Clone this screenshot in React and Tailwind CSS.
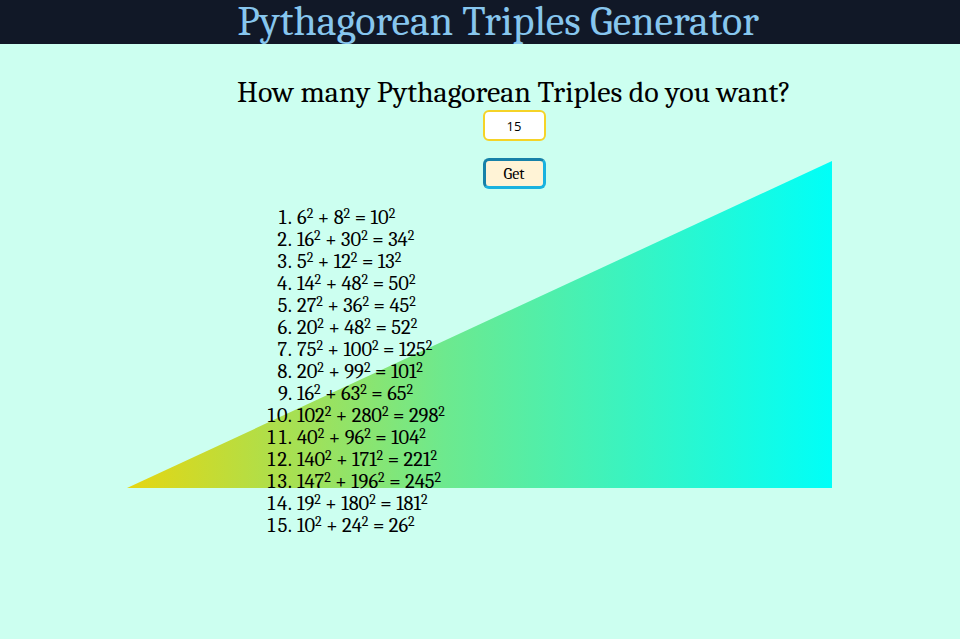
import React, { useState } from 'react';

// Pythagorean triples list, same order as the screenshot
const triples = [
  [6, 8, 10], [16, 30, 34], [5, 12, 13], [14, 48, 50], [27, 36, 45],
  [20, 48, 52], [75, 100, 125], [20, 99, 101], [16, 63, 65], [102, 280, 298],
  [40, 96, 104], [140, 171, 221], [147, 196, 245], [19, 180, 181], [10, 24, 26],
];

const serif = "font-['Cambria','Liberation_Serif',serif]";

const Sq = ({ n }) => (
  <span>
    {n}<sup className="-top-[0.45em] text-[14px]">2</sup>
  </span>
);

const App = () => {
  const [count, setCount] = useState('15');

  return (
    <div className={`relative min-h-[639px] w-full overflow-hidden bg-[#ccfff0] ${serif}`}>
      {/* Triangle backdrop */}
      <svg className="absolute left-[127px] top-[161px]" width="705" height="327" viewBox="0 0 705 327">
        <defs>
          <linearGradient id="tri" x1="0" y1="0" x2="1" y2="0">
            <stop offset="0%" stopColor="#e6d611" />
            <stop offset="45%" stopColor="#6de98e" />
            <stop offset="100%" stopColor="#00fff8" />
          </linearGradient>
        </defs>
        <polygon points="0,327 705,0 705,327" fill="url(#tri)" />
      </svg>

      <header className="relative h-[44px] bg-[#111827] pl-[36px] text-center">
        <h1 className="text-[42px] leading-[44px] text-[#87c6ee]">Pythagorean Triples Generator</h1>
      </header>

      <main className="relative flex flex-col items-center pl-[68px] pt-[32px]">
        <h2 className="text-[30px] leading-[34px] text-black">How many Pythagorean Triples do you want?</h2>
        <input
          value={count}
          onChange={(e) => setCount(e.target.value)}
          className="mt-0 h-[31px] w-[63px] rounded-md border-2 border-[#f5d327] bg-white text-center font-['Open_Sans',sans-serif] text-[13px] text-black outline-none"
        />
        <button className={`mt-[17px] h-[31px] w-[63px] rounded-md border-[3px] border-t-[#1681a8] border-l-[#1681a8] border-b-[#1ab2df] border-r-[#1ab2df] bg-[#fff3d6] text-[16px] text-black ${serif}`}>
          Get
        </button>
      </main>

      <ol className="relative ml-[296px] mt-[18px] list-decimal text-[20.5px] leading-[22px] text-black">
        {triples.map(([a, b, c], i) => (
          <li key={i} className="pl-[1px]">
            <Sq n={a} /> + <Sq n={b} /> = <Sq n={c} />
          </li>
        ))}
      </ol>
    </div>
  );
};

export default App;
